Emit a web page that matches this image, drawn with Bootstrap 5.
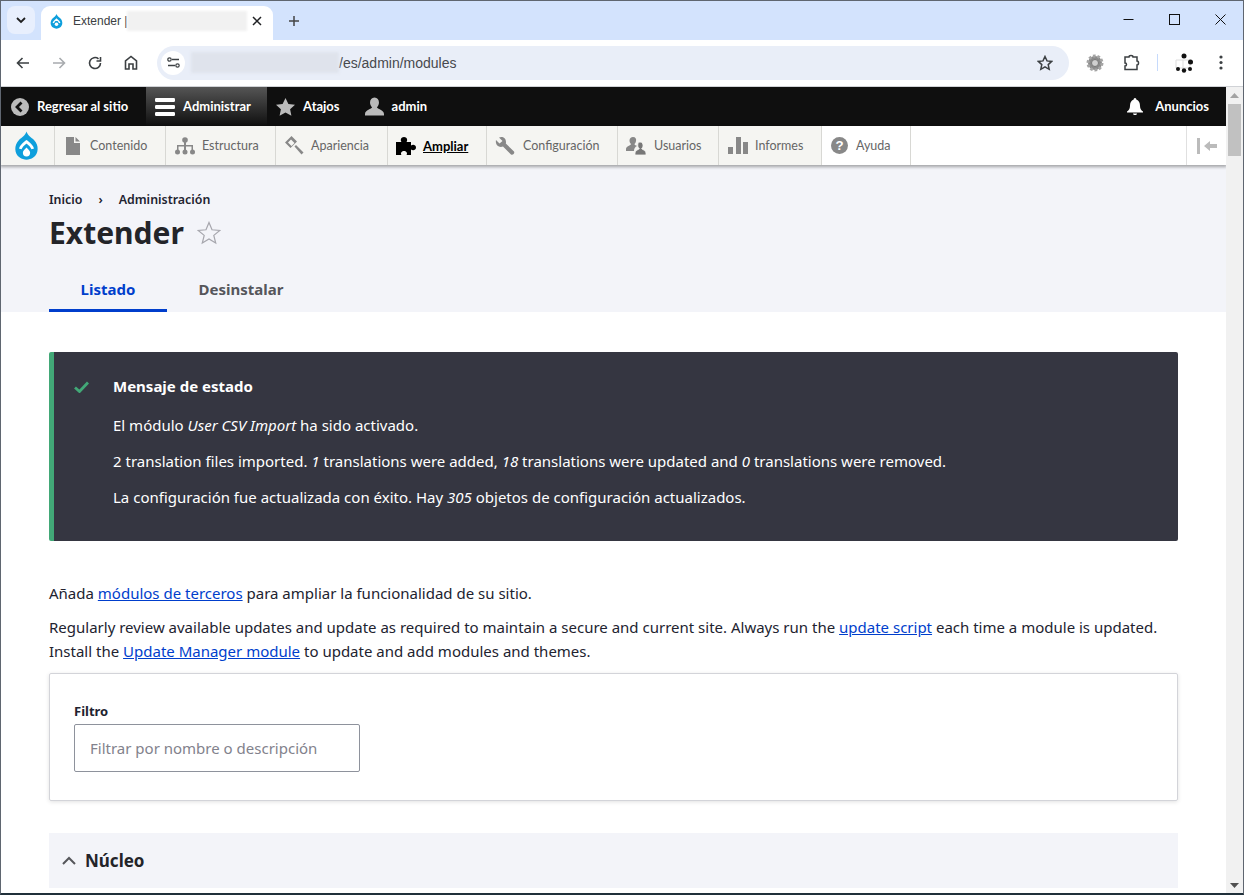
<!DOCTYPE html>
<html lang="es"><head><meta charset="utf-8"><title>Extender</title>
<link href="https://cdn.jsdelivr.net/npm/bootstrap@5.3.0/dist/css/bootstrap.min.css" rel="stylesheet">
<style>
html,body{height:100%;overflow:hidden;background:#fff}
body{font-family:"Noto Sans",sans-serif;font-size:15px;color:#222330}
.win{height:895px;width:1244px;border:1px solid #5f6670;border-bottom-width:2px;border-bottom-color:#20303a;overflow:hidden}
.tabstrip{height:39px;background:#d3e3fd;padding-top:5px}
.chev{width:28px;height:28px;margin-left:6px;margin-right:6px;background:#e8effd;border-radius:8px}
.ctab{width:232px;height:34px;background:#fff;border-radius:9px 9px 0 0;padding:0 11px 4px 9px;font:12px "Liberation Sans",sans-serif;color:#3c4043;white-space:nowrap}
.ctabtxt{margin-left:10px;flex-shrink:0}
.blur1{width:120px;height:20px;flex-shrink:0;background:#f1f1f1;filter:blur(1px)}
.plusic{margin:9px 0 0 15px}
.winbtn{width:46px}
.omni{height:47px;background:#fff;border-radius:8px 8px 0 0;border-bottom:1px solid #d0d2d6;padding:6px 0 7px}
.navbtn{width:36px}
.pill{width:912px;height:34px;background:#e9eef8;border-radius:17px;margin-left:8px;padding:0 16px 0 4px;font:14px "Liberation Sans",sans-serif;color:#47494d}
.pillic{width:24px;height:24px;background:#fff;border-radius:50%}
.blur2{width:148px;height:21px;background:#dfe3ec;margin-left:6px;filter:blur(1.5px)}
.extic{width:36px}
.extsep{width:1px;height:17px;background:#c6dafc;margin:0 8px}
.kebab{margin-left:1px}
.pagecol{width:1226px;height:807px;overflow:hidden}
.sbar{width:17px;background:#f1f1f1}
.sthumb{height:52px;background:#c1c1c1;margin:0 2px 0 2px}
.sarrow{height:17px}
.topbar{height:39px;background:#0f0f0f;font:700 13px Lato,sans-serif;color:#fff}
.topbar span{padding-bottom:2px}
.topitem{height:39px;padding:0 9px;gap:8px}
.topback{width:145px;padding-left:10px}
.topitem.on{width:121px;background:linear-gradient(#555,#0f0f0f)}
.topuser{margin-left:7px;gap:8px}
.topnews{margin-right:8px;gap:12px}
.tray{height:39px;background:#fff;box-shadow:0 1px 3px 1px rgba(0,0,0,.33);position:relative;font:12.5px Lato,sans-serif;color:#666}
.trayitem{height:39px;background:#f5f5f2;border-right:1px solid #d8d8d4;padding-left:9px}
.trayitem.wht{background:#fff}
.trayitem.act{color:#000;font-weight:700;font-size:13px;text-decoration:underline}
.tl0{width:54px;padding-left:13px}.tl1{width:111px;padding-left:11px;gap:10px}.tl2{width:110px;gap:7px}.tl3{width:112px;gap:7px}.tl4{width:99px;padding-left:8px;gap:7px}.tl5{width:131px;padding-left:8px;gap:8px}.tl6{width:101px;padding-left:8px;gap:8px}.tl7{width:103px;gap:7px}.tl8{width:89px;gap:8px}
.traytog{width:40px;border-left:1px solid #e0e0e0}
.headzone{height:147px;background:#f3f4f9;padding:0 48px}
.crumbs{padding-top:26px;font-size:12.4px;font-weight:600;line-height:17px;color:#222330;gap:16px}
.ptitle{font-size:30px;font-weight:700;line-height:36px;margin:7px 0 0;color:#232429}
.titlestar{margin-left:13px}
.tabz{margin-top:13px}
.tabz a{display:block;height:48px;padding-top:14px;text-decoration:none;font-weight:700;font-size:15px;color:#55565b;text-align:center}
.tabz a.cur{width:118px;color:#003ecc;border-bottom:3px solid #003ecc}
.tabz a.oth{width:148px}
.mainz{padding:40px 48px 0}
.statusbox{height:189px;background:#353641;color:#fff;border-left:5px solid #42a877;border-radius:2px;padding:0 20px}
.statusbox p{margin:0 0 14px;line-height:22px}
.statusic{width:39px;padding-top:22px}
.stitle{font-weight:700;padding-top:23px;margin-bottom:17px !important}
.intro p{margin:0;line-height:24px}
.intro{font-size:15px;padding-top:40px}
.intro p.firstp{margin-bottom:10px}
.intro a{color:#003ecc}
.filterbox{height:128px;margin-top:10px;border:1px solid #d3d4d9;border-radius:2px;box-shadow:0 1px 4px rgba(0,0,0,.12);padding:29px 24px 0}
.filterbox label{display:block;font-size:13px;font-weight:700;line-height:16px;margin-bottom:5px}
.filterbox input{width:286px;height:48px;border:1px solid #8e929c;border-radius:2px;padding:0 15px;font:15px "Noto Sans",sans-serif}
.filterbox input::placeholder{color:#82828c;opacity:1}
.coregroup{height:55px;margin-top:32px;background:#f3f4f9;padding-left:13px;gap:9px;font-size:17px;font-weight:700;color:#232429}
</style></head><body>
<div class="win d-flex flex-column">
 <div class="tabstrip d-flex">
  <div class="chev d-flex align-items-center justify-content-center"><svg width="10" height="7" viewBox="0 0 10 7"><path d="M1 1l4 4 4-4" fill="none" stroke="#1f1f1f" stroke-width="1.8"/></svg></div>
  <div class="ctab d-flex align-items-center">
   <svg width="13" height="15" viewBox="0 0 26 30"><path d="M13 0c1 4 5 6 8 9 5 5 5 14-1 18-4 3-10 3-14 0C0 23 0 14 5 9c3-3 7-5 8-9z" fill="#0e9fdc"/><path d="M6.500 18c1-3 4-5.500 6.500-7.500 2.500 2 5.500 4.500 6.500 7.500" fill="none" stroke="#fff" stroke-width="3"/><circle cx="13" cy="20.500" r="3.500" fill="#fff"/></svg>
   <span class="ctabtxt">Extender |</span><span class="blur1"></span>
   <svg class="ms-auto" width="10" height="10" viewBox="0 0 10 10"><path d="M1 1l8 8M9 1l-8 8" stroke="#202124" stroke-width="1.5"/></svg>
  </div>
  <svg class="plusic" width="12" height="12" viewBox="0 0 12 12"><path d="M6 1v10M1 6h10" stroke="#444" stroke-width="1.5"/></svg>
  <div class="ms-auto d-flex align-items-center pb-2">
   <div class="winbtn d-flex justify-content-center"><svg width="11" height="11" viewBox="0 0 11 11"><path d="M.5 5.500h10" stroke="#111"/></svg></div>
   <div class="winbtn d-flex justify-content-center"><svg width="11" height="11" viewBox="0 0 11 11"><rect x=".5" y=".5" width="10" height="10" fill="none" stroke="#111"/></svg></div>
   <div class="winbtn d-flex justify-content-center"><svg width="11" height="11" viewBox="0 0 11 11"><path d="M.5.5l10 10M10.500.5l-10 10" stroke="#111"/></svg></div>
  </div>
 </div>
 <div class="omni d-flex align-items-center">
  <div class="navbtn d-flex justify-content-center ms-1"><svg width="14" height="12" viewBox="0 0 14 12"><path d="M13 6H2M6.500 1L1.500 6l5 5" fill="none" stroke="#3c4043" stroke-width="1.6"/></svg></div>
  <div class="navbtn d-flex justify-content-center"><svg width="14" height="12" viewBox="0 0 14 12"><path d="M1 6h11M7.500 1l5 5-5 5" fill="none" stroke="#a8abae" stroke-width="1.6"/></svg></div>
  <div class="navbtn d-flex justify-content-center"><svg width="14" height="14" viewBox="0 0 14 14"><path d="M12.500 7A5.500 5.500 0 1 1 10.500 2.800M12.500 1v4h-4" fill="none" stroke="#3c4043" stroke-width="1.6"/></svg></div>
  <div class="navbtn d-flex justify-content-center"><svg width="14" height="15" viewBox="0 0 14 15"><path d="M1.500 14V6L7 1.500 12.500 6v8H9V9H5v5z" fill="none" stroke="#3c4043" stroke-width="1.6"/></svg></div>
  <div class="pill d-flex align-items-center">
   <div class="pillic d-flex align-items-center justify-content-center"><svg width="13" height="11" viewBox="0 0 13 11"><path d="M5 2.500h7M1 8.500h7" stroke="#3c4043" stroke-width="1.300"/><circle cx="2.500" cy="2.500" r="1.700" fill="none" stroke="#3c4043" stroke-width="1.200"/><circle cx="10.500" cy="8.500" r="1.700" fill="none" stroke="#3c4043" stroke-width="1.200"/></svg></div>
   <span class="blur2"></span><span>/es/admin/modules</span>
   <svg class="ms-auto" width="16" height="16" viewBox="0 0 16 16"><path d="M8 1.500l2 4.400 4.700.5-3.500 3.200 1 4.700L8 11.900l-4.200 2.400 1-4.700L1.300 6.400 6 5.900z" fill="none" stroke="#3c4043" stroke-width="1.500"/></svg>
  </div>
  <div class="extic d-flex justify-content-center ms-2"><svg width="18" height="18" viewBox="0 0 18 18"><circle cx="9" cy="9" r="7" fill="#8a8a8a" stroke="#a5a5a5" stroke-width="3" stroke-dasharray="2.600 1.800"/><circle cx="9" cy="9" r="3.500" fill="#d0d0d0" stroke="#777"/></svg></div>
  <div class="extic d-flex justify-content-center"><svg width="17" height="17" viewBox="0 0 17 17"><path d="M2 3h4c0-2 4-2 4 0h4v4c2 0 2 4 0 4v4.500H2v-3.500c2 0 2-3 0-3z" fill="none" stroke="#3c4043" stroke-width="1.500"/></svg></div>
  <span class="extsep"></span>
  <div class="extic d-flex justify-content-center"><svg width="20" height="20" viewBox="0 0 20 20"><path d="M2 7h14v8H2zM9 7v8" fill="none" stroke="#ddd"/><circle cx="10" cy="3" r="2.500" fill="#111"/><circle cx="16.500" cy="9" r="2.500" fill="#111"/><circle cx="4" cy="16" r="2" fill="#111"/><circle cx="10" cy="17.500" r="2.200" fill="#111"/><circle cx="16" cy="16" r="2" fill="#111"/></svg></div>
  <div class="extic kebab d-flex justify-content-center"><svg width="4" height="15" viewBox="0 0 4 15"><circle cx="2" cy="2" r="1.600" fill="#3c4043"/><circle cx="2" cy="7.500" r="1.600" fill="#3c4043"/><circle cx="2" cy="13" r="1.600" fill="#3c4043"/></svg></div>
 </div>
 <div class="d-flex flex-grow-1">
 <div class="pagecol">
  <div class="topbar d-flex align-items-center">
   <div class="topitem topback d-flex align-items-center"><svg width="18" height="18" viewBox="0 0 18 18"><circle cx="9" cy="9" r="9" fill="#bbb"/><path d="M10.500 4.500L6 9l4.500 4.500" fill="none" stroke="#111" stroke-width="2.800"/></svg><span>Regresar al sitio</span></div>
   <div class="topitem on d-flex align-items-center"><svg width="20" height="18" viewBox="0 0 20 18"><g fill="#fff"><rect width="20" height="4" rx="1.200"/><rect y="7" width="20" height="4" rx="1.200"/><rect y="14" width="20" height="4" rx="1.200"/></g></svg><span>Administrar</span></div>
   <div class="topitem d-flex align-items-center"><svg width="19" height="18" viewBox="0 0 19 18"><path d="M9.500 0l2.900 6 6.600.8-4.900 4.500 1.300 6.500-5.900-3.200-5.900 3.200 1.300-6.500L0 6.800 6.600 6z" fill="#bbb"/></svg><span>Atajos</span></div>
   <div class="topitem topuser d-flex align-items-center"><svg width="19" height="19" viewBox="0 0 20 19"><path d="M10 0c3 0 4.700 2.300 4.700 5.300 0 2.300-1 4-2.200 5 .3 1.700 7.500 3 7.500 7V19H0v-1.700c0-4 7.200-5.300 7.500-7-1.200-1-2.200-2.700-2.200-5C5.300 2.300 7 0 10 0z" fill="#bbb"/></svg><span>admin</span></div>
   <div class="topitem topnews d-flex align-items-center ms-auto"><svg width="16" height="17" viewBox="0 0 16 17"><path d="M8 0c1 0 1.300.8 1.300 1.500C12 2.200 13 5 13 8c0 3 1.500 4.500 3 5.500V14.500H0v-1C1.500 12.500 3 11 3 8c0-3 1-5.800 3.700-6.500C6.700.8 7 0 8 0zM6 15.500h4c0 1-1 1.500-2 1.500s-2-.5-2-1.500z" fill="#fff"/></svg><span>Anuncios</span></div>
  </div>
  <div class="tray d-flex">
   <div class="trayitem tl0 d-flex align-items-center"><svg width="25" height="30" viewBox="0 0 26 30"><path d="M13 0c1 4 5 6 8 9 5 5 5 14-1 18-4 3-10 3-14 0C0 23 0 14 5 9c3-3 7-5 8-9z" fill="#0e9fdc"/><path d="M6.500 18c1-3 4-5.500 6.500-7.500 2.500 2 5.500 4.500 6.500 7.500" fill="none" stroke="#fff" stroke-width="2.800"/><path d="M13 16.500c1.500 2 3.800 3.300 3.800 5.500a3.800 3.800 0 0 1-7.600 0c0-2.200 2.300-3.500 3.800-5.500z" fill="#fff"/></svg></div>
   <div class="trayitem tl1 d-flex align-items-center"><svg width="14" height="18" viewBox="0 0 14 18"><path d="M0 0h8v6h6v12H0zM9.500 0L14 4.500H9.500z" fill="#888"/></svg><span>Contenido</span></div>
   <div class="trayitem tl2 d-flex align-items-center"><svg width="20" height="18" viewBox="0 0 20 18"><g fill="#888"><circle cx="10" cy="3" r="2.800"/><circle cx="2.500" cy="15" r="2.500"/><circle cx="10" cy="15" r="2.500"/><circle cx="17.500" cy="15" r="2.500"/><path d="M9 5h2v3h7v5h-1.500V9.500h-5.500V13H9V9.500H3.500V13H2V8h7z"/></g></svg><span>Estructura</span></div>
   <div class="trayitem tl3 d-flex align-items-center"><svg width="19" height="19" viewBox="0 0 19 19"><g fill="#888"><path d="M0 6.500L6.500 0l5.500 5.500L5.500 12zM3 6.500l3.500 3.500 3-3L6 3.500z"/><path d="M9.500 10.500l1.500-1.500L18.500 16.500l-2 2z"/></g></svg><span>Apariencia</span></div>
   <div class="trayitem act tl4 d-flex align-items-center"><svg width="20" height="18" viewBox="0 0 20 18"><path d="M0 5h5.500C4 3 5 0 8 0s4 3 2.500 5H15v3.500c2-1.500 5-.5 5 2s-3 3.500-5 2V18h-4.500c1.500-2-.5-4-2.500-4s-4 2-2.500 4H0z" fill="#000"/></svg><span>Ampliar</span></div>
   <div class="trayitem tl5 d-flex align-items-center"><svg width="20" height="20" viewBox="0 0 20 20"><path d="M1 4l3.500 3.500L7.500 5 4 1.500C7 0 11 1.500 11 6c0 .7 0 1-.2 1.500l8.200 8c1 1.500-.8 4-3 3l-8-8C4 12 0 9 1 4z" fill="#888"/></svg><span>Configuración</span></div>
   <div class="trayitem tl6 d-flex align-items-center"><svg width="20" height="18" viewBox="0 0 20 18"><path d="M7 0c2.500 0 3.500 2 3 4-.2 1.500-1 2.500-1.500 3 0 1 1.500 1.500 2.500 2-2 1-3 2.500-3 5H0v-2c0-3 5-3.500 5-5-1-.8-1.500-2-1.500-3.500C3.500 1.500 5 0 7 0z" fill="#888"/><path d="M14 5c2 0 3 1.500 3 3.500 0 1.500-.7 2.500-1.300 3 0 1.200 4.300 1.600 4.300 4.500v2H9v-2c0-3 4.300-3.300 4.300-4.500-.8-.5-1.500-1.500-1.500-3C11.800 6.500 12 5 14 5z" fill="#777" stroke="#f5f5f2" stroke-width=".8"/></svg><span>Usuarios</span></div>
   <div class="trayitem tl7 d-flex align-items-center"><svg width="20" height="17" viewBox="0 0 20 17"><g fill="#888"><rect y="10" width="5" height="7"/><rect x="8" width="5" height="17"/><rect x="15" y="5" width="5" height="12"/></g></svg><span>Informes</span></div>
   <div class="trayitem wht tl8 d-flex align-items-center"><svg width="17" height="17" viewBox="0 0 18 18"><circle cx="9" cy="9" r="9" fill="#888"/><text x="9" y="14" text-anchor="middle" font-family="Liberation Sans" font-weight="700" font-size="14" fill="#fff">?</text></svg><span>Ayuda</span></div>
   <div class="traytog ms-auto d-flex align-items-center justify-content-center"><svg width="20" height="16" viewBox="0 0 20 16"><g fill="#bbb"><rect x="0" y="0" width="3" height="16"/><path d="M7 8l6-5v3h7v4h-7v3z"/></g></svg></div>
  </div>
  <div class="headzone">
   <div class="crumbs d-flex"><span>Inicio</span><span>›</span><span>Administración</span></div>
   <h1 class="ptitle d-flex align-items-center">Extender <svg class="titlestar" width="24" height="24" viewBox="0 0 24 24"><path d="M12 1.500l3 7.300 7.800.6-6 5 1.900 7.600-6.700-4.100L5.300 22l1.900-7.600-6-5 7.800-.6z" fill="none" stroke="#a6a6ad" stroke-width="1.200"/></svg></h1>
   <div class="tabz d-flex"><a class="cur" href="#">Listado</a><a class="oth" href="#">Desinstalar</a></div>
  </div>
  <div class="mainz">
   <div class="statusbox d-flex">
    <div class="statusic"><svg width="15" height="12" viewBox="0 0 15 12"><path d="M1 6.500L5.500 10.500 14 1.500" fill="none" stroke="#42a877" stroke-width="2.800"/></svg></div>
    <div>
     <p class="stitle">Mensaje de estado</p>
     <p>El módulo <em>User CSV Import</em> ha sido activado.</p>
     <p>2 translation files imported. <em>1</em> translations were added, <em>18</em> translations were updated and <em>0</em> translations were removed.</p>
     <p>La configuración fue actualizada con éxito. Hay <em>305</em> objetos de configuración actualizados.</p>
    </div>
   </div>
   <div class="intro">
    <p class="firstp">Añada <a href="#">módulos de terceros</a> para ampliar la funcionalidad de su sitio.</p>
    <p>Regularly review available updates and update as required to maintain a secure and current site. Always run the <a href="#">update script</a> each time a module is updated. Install the <a href="#">Update Manager module</a> to update and add modules and themes.</p>
   </div>
   <div class="filterbox"><label for="flt">Filtro</label><input id="flt" type="text" placeholder="Filtrar por nombre o descripción"></div>
   <div class="coregroup d-flex align-items-center"><svg width="14" height="9" viewBox="0 0 14 9"><path d="M1 8l6-6 6 6" fill="none" stroke="#55565b" stroke-width="2"/></svg><span>Núcleo</span></div>
  </div>
 </div>
 <div class="sbar d-flex flex-column">
  <div class="sarrow d-flex align-items-center justify-content-center"><svg width="9" height="5" viewBox="0 0 9 5"><path d="M4.500 0L9 5H0z" fill="#a3a3a3"/></svg></div>
  <div class="sthumb"></div>
  <div class="sarrow mt-auto d-flex align-items-center justify-content-center"><svg width="9" height="5" viewBox="0 0 9 5"><path d="M0 0h9L4.500 5z" fill="#505050"/></svg></div>
 </div>
 </div>
</div>
<script src="https://cdn.jsdelivr.net/npm/bootstrap@5.3.0/dist/js/bootstrap.bundle.min.js"></script>
</body></html>
